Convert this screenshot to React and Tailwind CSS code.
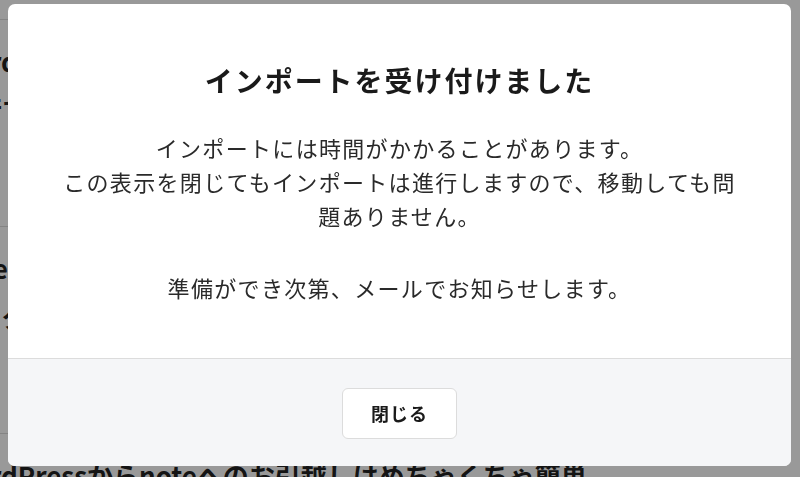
import React from "react";

const articles = [
  {
    title: ["WordPressの記事をまとめて", "移行する手順を紹介します「"],
    author: "なかの",
    date: "2日前",
  },
  {
    title: ["noteのインポート機能を使って", "ブログを引っ越しましたI"],
    author: "たなか",
    date: "3日前",
  },
  {
    title: ["WordPressからnoteへのお引越しはめちゃくちゃ簡単", ""],
    author: "すずき",
    date: "5日前",
  },
];

function ArticleRow({ article }) {
  return (
    <div className="h-[207px] border-t border-[#dddddd] pt-[17px]">
      <p className="text-[26px] leading-[48px] font-bold text-[#222] whitespace-nowrap">
        {article.title[0]}
      </p>
      <p className="text-[26px] leading-[48px] font-bold text-[#222] whitespace-nowrap">
        {article.title[1]}
      </p>
      <p className="mt-[4px] text-[14px] leading-[37px] text-[#666] whitespace-nowrap">
        {article.author}
      </p>
      <p className="text-[14px] leading-[37px] text-[#666] whitespace-nowrap">
        {article.date}
      </p>
    </div>
  );
}

export default function App() {
  return (
    <div
      className="relative h-[477px] w-[800px] overflow-hidden bg-white"
      style={{ fontFamily: '"Noto Sans CJK JP", "Noto Sans", sans-serif' }}
    >
      {/* page behind the dialog */}
      <div className="ml-[-50px] pt-[19px] w-[700px]">
        {articles.map((a) => (
          <ArticleRow key={a.title[0]} article={a} />
        ))}
      </div>

      {/* overlay + dialog */}
      <div className="fixed inset-0 bg-black/40 pt-[4px] pl-[8px] pr-[9px]">
        <div className="overflow-hidden rounded-[7px] bg-white">
          <div className="px-[40px] pt-[56px] pb-[54px] text-center">
            <h2 className="text-[28px] leading-[40px] font-bold tracking-[0.07em] text-[#1a1a1a]">
              インポートを受け付けました
            </h2>
            <p className="mt-[30px] text-[22px] leading-[34px] tracking-[0.06em] text-[#2a2a2a]">
              インポートには時間がかかることがあります。
              <br />
              この表示を閉じてもインポートは進行しますので、移動しても問
              <br />
              題ありません。
            </p>
            <p className="mt-[38px] text-[22px] leading-[34px] tracking-[0.06em] text-[#2a2a2a]">
              準備ができ次第、メールでお知らせします。
            </p>
          </div>
          <div className="flex justify-center border-t border-[#dcdcdc] bg-[#f5f6f8] pt-[29px] pb-[27px]">
            <button className="h-[51px] w-[115px] rounded-[6px] border border-[#dcdcdc] bg-white text-[18px] font-bold tracking-[0.06em] text-[#1a1a1a]">
              閉じる
            </button>
          </div>
        </div>
      </div>
    </div>
  );
}
